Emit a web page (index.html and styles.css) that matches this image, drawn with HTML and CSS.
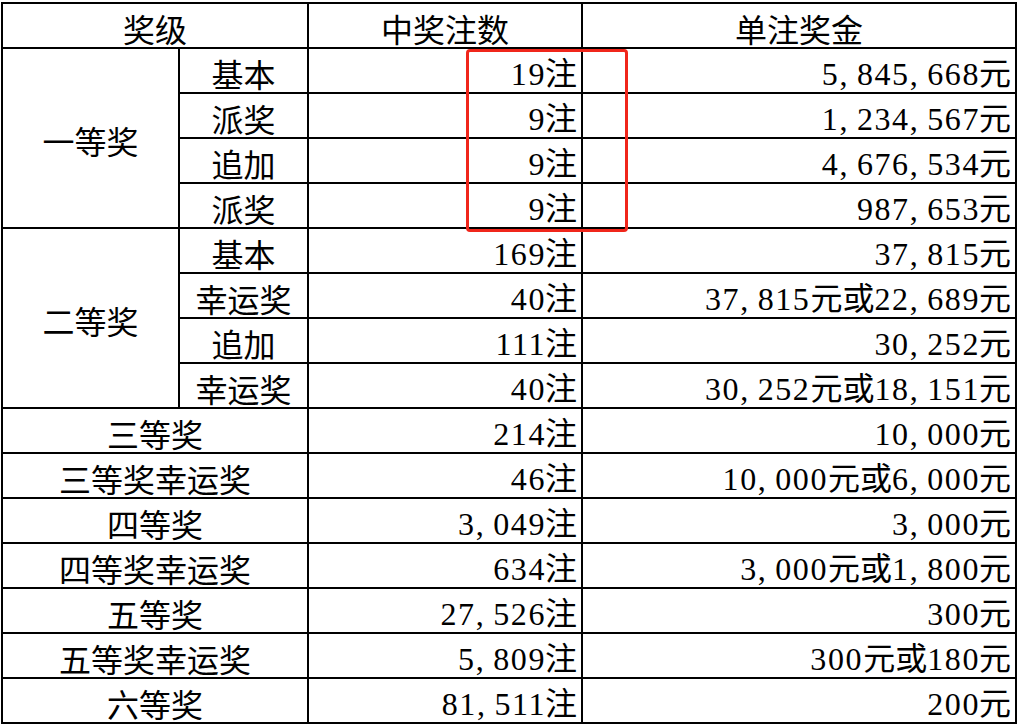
FILE: index.html
```html
<!DOCTYPE html>
<html>
<head>
<meta charset="utf-8">
<title>奖级</title>
<link rel="stylesheet" href="styles.css">
</head>
<body>
<div class="wrap">
<table class="prize">
  <colgroup>
    <col class="c1"><col class="c2"><col class="c3"><col class="c4">
  </colgroup>
  <tr><td colspan="2" class="lbl span2">奖级</td><td class="lbl g3">中奖注数</td><td class="lbl g4">单注奖金</td></tr>
  <tr><td rowspan="4" class="lbl">一等奖</td><td class="lbl">基本</td><td class="num g3">19<span class="u">注</span></td><td class="num g4">5<span class="cm">,</span>845<span class="cm">,</span>668<span class="u">元</span></td></tr>
  <tr><td class="lbl">派奖</td><td class="num g3">9<span class="u">注</span></td><td class="num g4">1<span class="cm">,</span>234<span class="cm">,</span>567<span class="u">元</span></td></tr>
  <tr><td class="lbl">追加</td><td class="num g3">9<span class="u">注</span></td><td class="num g4">4<span class="cm">,</span>676<span class="cm">,</span>534<span class="u">元</span></td></tr>
  <tr><td class="lbl">派奖</td><td class="num g3">9<span class="u">注</span></td><td class="num g4">987<span class="cm">,</span>653<span class="u">元</span></td></tr>
  <tr><td rowspan="4" class="lbl">二等奖</td><td class="lbl">基本</td><td class="num g3">169<span class="u">注</span></td><td class="num g4">37<span class="cm">,</span>815<span class="u">元</span></td></tr>
  <tr><td class="lbl">幸运奖</td><td class="num g3">40<span class="u">注</span></td><td class="num g4">37<span class="cm">,</span>815<span class="u">元或</span>22<span class="cm">,</span>689<span class="u">元</span></td></tr>
  <tr><td class="lbl">追加</td><td class="num g3">111<span class="u">注</span></td><td class="num g4">30<span class="cm">,</span>252<span class="u">元</span></td></tr>
  <tr><td class="lbl">幸运奖</td><td class="num g3">40<span class="u">注</span></td><td class="num g4">30<span class="cm">,</span>252<span class="u">元或</span>18<span class="cm">,</span>151<span class="u">元</span></td></tr>
  <tr><td colspan="2" class="lbl span2">三等奖</td><td class="num g3">214<span class="u">注</span></td><td class="num g4">10<span class="cm">,</span>000<span class="u">元</span></td></tr>
  <tr><td colspan="2" class="lbl span2">三等奖幸运奖</td><td class="num g3">46<span class="u">注</span></td><td class="num g4">10<span class="cm">,</span>000<span class="u">元或</span>6<span class="cm">,</span>000<span class="u">元</span></td></tr>
  <tr><td colspan="2" class="lbl span2">四等奖</td><td class="num g3">3<span class="cm">,</span>049<span class="u">注</span></td><td class="num g4">3<span class="cm">,</span>000<span class="u">元</span></td></tr>
  <tr><td colspan="2" class="lbl span2">四等奖幸运奖</td><td class="num g3">634<span class="u">注</span></td><td class="num g4">3<span class="cm">,</span>000<span class="u">元或</span>1<span class="cm">,</span>800<span class="u">元</span></td></tr>
  <tr><td colspan="2" class="lbl span2">五等奖</td><td class="num g3">27<span class="cm">,</span>526<span class="u">注</span></td><td class="num g4">300<span class="u">元</span></td></tr>
  <tr><td colspan="2" class="lbl span2">五等奖幸运奖</td><td class="num g3">5<span class="cm">,</span>809<span class="u">注</span></td><td class="num g4">300<span class="u">元或</span>180<span class="u">元</span></td></tr>
  <tr><td colspan="2" class="lbl span2">六等奖</td><td class="num g3">81<span class="cm">,</span>511<span class="u">注</span></td><td class="num g4">200<span class="u">元</span></td></tr>
</table>
<div class="mark"></div>
</div>
</body>
</html>
```

FILE: styles.css
```css
html, body {
  margin: 0;
  padding: 0;
  background: #fff;
}
.wrap {
  position: relative;
  padding: 2px 0 0 1px;
}
.prize {
  border-collapse: collapse;
  table-layout: fixed;
  width: 1014px;
  font-family: "Liberation Serif", serif;
  font-size: 32px;
  color: #000;
}
.c1 { width: 177px; }
.c2 { width: 129px; }
.c3 { width: 274px; }
.c4 { width: 434px; }
.prize tr { height: 45px; }
.prize td {
  border: 2px solid #000;
  padding: 4px 4px 0 4px;
  line-height: 36px;
  white-space: nowrap;
  vertical-align: middle;
  background-repeat: no-repeat;
  background-size: 1px 100%;
  background-image: none;
}
.lbl {
  text-align: center;
  font-family: "Noto Sans CJK SC", sans-serif;
  font-size: 32px;
}
.num {
  text-align: right;
  letter-spacing: 1.6px;
}
.u {
  font-family: "Noto Sans CJK SC", sans-serif;
  letter-spacing: 0;
}
.cm {
  letter-spacing: 0;
  margin-right: 9.5px;
}
.num .u:last-child { margin-left: -1px; }
.span2 {
  background-image: linear-gradient(#d9d9d9, #d9d9d9);
  background-position: 176px 0;
}
.g3 {
  background-image: linear-gradient(#e0e0e0, #e0e0e0);
  background-position: 176px 0;
}
.g4 {
  background-image: linear-gradient(#e0e0e0, #e0e0e0);
  background-position: 71px 0;
}
.mark {
  position: absolute;
  left: 466px;
  top: 49px;
  width: 156px;
  height: 177px;
  border: 3px solid #f0261b;
  border-radius: 4px;
}
```
